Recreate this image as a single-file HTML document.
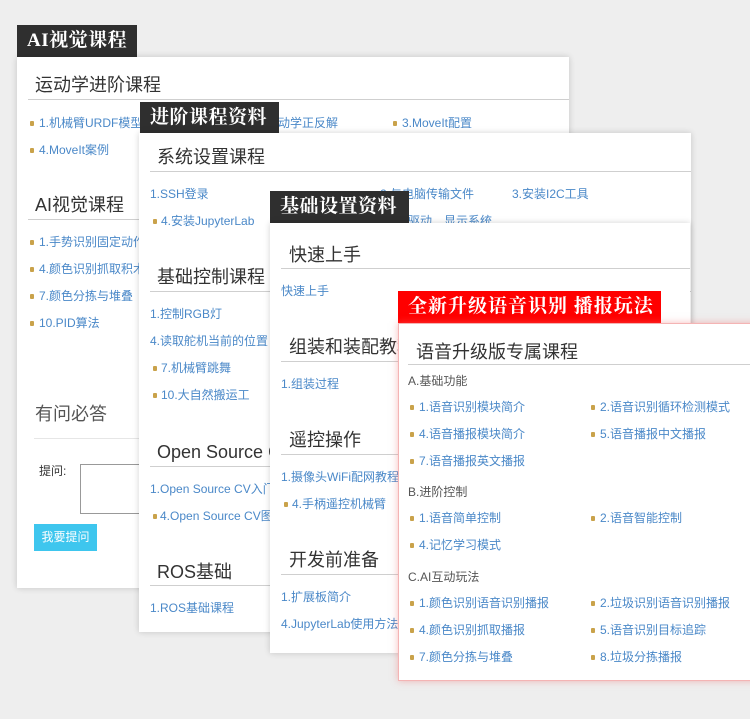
<!DOCTYPE html>
<html><head><meta charset="utf-8"><style>
*{margin:0;padding:0;box-sizing:border-box}
body{width:750px;height:719px;background:#eeeeee;position:relative;overflow:hidden;font-family:"Liberation Sans","Noto Sans CJK SC",sans-serif}
div,span{position:absolute;white-space:nowrap}
.p{background:#fff;box-shadow:0 0 6px rgba(0,0,0,.18)}
.lb{background:#2f2f2f;color:#fff;font-family:"Liberation Serif","Noto Serif CJK SC",serif;font-weight:bold;font-size:19px;line-height:31px;padding-left:10px;letter-spacing:0.5px}
.h{font-size:18px;line-height:22px;color:#333}
.ln{height:1px;background:#cfcfcf}
.a{font-size:12px;line-height:16px;color:#4a88c8}
.b{width:4px;height:5px;background:#c9a24a;border-radius:1px}
.s{font-size:12px;line-height:16px;color:#555}
</style></head><body>

<!-- Panel 1 -->
<div class="lb" style="left:17px;top:25px;width:120px;height:32px">AI视觉课程</div>
<div class="p" style="left:17px;top:57px;width:552px;height:531px"></div>
<div class="h" style="left:35px;top:74px">运动学进阶课程</div>
<div class="ln" style="left:28px;top:99px;width:541px"></div>
<div class="b" style="left:30px;top:121px"></div><div class="a" style="left:39px;top:115px">1.机械臂URDF模型</div>
<div class="a" style="left:256px;top:115px">2.运动学正反解</div>
<div class="b" style="left:393px;top:121px"></div><div class="a" style="left:402px;top:115px">3.MoveIt配置</div>
<div class="b" style="left:30px;top:148px"></div><div class="a" style="left:39px;top:142px">4.MoveIt案例</div>
<div class="h" style="left:35px;top:194px">AI视觉课程</div>
<div class="ln" style="left:28px;top:219px;width:541px"></div>
<div class="b" style="left:30px;top:240px"></div><div class="a" style="left:39px;top:234px">1.手势识别固定动作</div>
<div class="b" style="left:30px;top:267px"></div><div class="a" style="left:39px;top:261px">4.颜色识别抓取积木</div>
<div class="b" style="left:30px;top:294px"></div><div class="a" style="left:39px;top:288px">7.颜色分拣与堆叠</div>
<div class="b" style="left:30px;top:321px"></div><div class="a" style="left:39px;top:315px">10.PID算法</div>
<div class="h" style="left:35px;top:403px;color:#555">有问必答</div>
<div class="ln" style="left:34px;top:438px;width:535px;background:#e6e6e6"></div>
<div class="s" style="left:39px;top:463px;color:#333">提问:</div>
<div style="left:80px;top:464px;width:100px;height:50px;border:1px solid #999"></div>
<div style="left:34px;top:524px;width:63px;height:27px;background:#3ec6ee;color:#fff;font-size:12px;line-height:27px;text-align:center">我要提问</div>

<!-- Panel 2 -->
<div class="lb" style="left:140px;top:102px;width:139px;height:31px">进阶课程资料</div>
<div class="p" style="left:139px;top:133px;width:552px;height:499px"></div>
<div class="h" style="left:157px;top:146px">系统设置课程</div>
<div class="ln" style="left:150px;top:171px;width:541px"></div>
<div class="a" style="left:150px;top:186px">1.SSH登录</div>
<div class="a" style="left:380px;top:186px">2.与电脑传输文件</div>
<div class="a" style="left:512px;top:186px">3.安装I2C工具</div>
<div class="b" style="left:153px;top:219px"></div><div class="a" style="left:161px;top:213px">4.安装JupyterLab</div>
<div class="a" style="left:350px;top:213px">5.安装屏幕驱动　显示系统</div>
<div class="h" style="left:157px;top:266px">基础控制课程</div>
<div class="ln" style="left:150px;top:291px;width:541px"></div>
<div class="a" style="left:150px;top:306px">1.控制RGB灯</div>
<div class="a" style="left:150px;top:333px">4.读取舵机当前的位置</div>
<div class="b" style="left:153px;top:366px"></div><div class="a" style="left:161px;top:360px">7.机械臂跳舞</div>
<div class="b" style="left:153px;top:393px"></div><div class="a" style="left:161px;top:387px">10.大自然搬运工</div>
<div class="h" style="left:157px;top:441px">Open Source CV</div>
<div class="ln" style="left:150px;top:466px;width:541px"></div>
<div class="a" style="left:150px;top:481px">1.Open Source CV入门</div>
<div class="b" style="left:153px;top:514px"></div><div class="a" style="left:160px;top:508px">4.Open Source CV图像处理</div>
<div class="h" style="left:157px;top:561px">ROS基础</div>
<div class="ln" style="left:150px;top:585px;width:541px"></div>
<div class="a" style="left:150px;top:600px">1.ROS基础课程</div>

<!-- Panel 3 -->
<div class="lb" style="left:270px;top:191px;width:139px;height:32px">基础设置资料</div>
<div class="p" style="left:270px;top:223px;width:420px;height:430px"></div>
<div class="h" style="left:289px;top:244px">快速上手</div>
<div class="ln" style="left:281px;top:268px;width:409px"></div>
<div class="a" style="left:281px;top:283px">快速上手</div>
<div class="h" style="left:289px;top:336px">组装和装配教程</div>
<div class="ln" style="left:281px;top:361px;width:409px"></div>
<div class="a" style="left:281px;top:376px">1.组装过程</div>
<div class="h" style="left:289px;top:429px">遥控操作</div>
<div class="ln" style="left:281px;top:454px;width:409px"></div>
<div class="a" style="left:281px;top:469px">1.摄像头WiFi配网教程</div>
<div class="b" style="left:284px;top:502px"></div><div class="a" style="left:292px;top:496px">4.手柄遥控机械臂</div>
<div class="h" style="left:289px;top:549px">开发前准备</div>
<div class="ln" style="left:281px;top:574px;width:409px"></div>
<div class="a" style="left:281px;top:589px">1.扩展板简介</div>
<div class="a" style="left:281px;top:616px">4.JupyterLab使用方法</div>

<!-- Panel 4 -->
<div class="lb" style="left:398px;top:291px;width:263px;height:32px;background:#ff0000;font-size:19px;letter-spacing:1px">全新升级语音识别 播报玩法</div>
<div style="left:398px;top:323px;width:360px;height:358px;background:#fff;border:1px solid #f4b4b4;box-shadow:0 0 7px rgba(240,120,120,.5)"></div>
<div class="h" style="left:416px;top:341px">语音升级版专属课程</div>
<div class="ln" style="left:408px;top:364px;width:342px"></div>
<div class="s" style="left:408px;top:373px">A.基础功能</div>
<div class="b" style="left:410px;top:405px"></div><div class="a" style="left:419px;top:399px">1.语音识别模块简介</div>
<div class="b" style="left:591px;top:405px"></div><div class="a" style="left:600px;top:399px">2.语音识别循环检测模式</div>
<div class="b" style="left:410px;top:432px"></div><div class="a" style="left:419px;top:426px">4.语音播报模块简介</div>
<div class="b" style="left:591px;top:432px"></div><div class="a" style="left:600px;top:426px">5.语音播报中文播报</div>
<div class="b" style="left:410px;top:459px"></div><div class="a" style="left:419px;top:453px">7.语音播报英文播报</div>
<div class="s" style="left:408px;top:484px">B.进阶控制</div>
<div class="b" style="left:410px;top:516px"></div><div class="a" style="left:419px;top:510px">1.语音简单控制</div>
<div class="b" style="left:591px;top:516px"></div><div class="a" style="left:600px;top:510px">2.语音智能控制</div>
<div class="b" style="left:410px;top:543px"></div><div class="a" style="left:419px;top:537px">4.记忆学习模式</div>
<div class="s" style="left:408px;top:569px">C.AI互动玩法</div>
<div class="b" style="left:410px;top:601px"></div><div class="a" style="left:419px;top:595px">1.颜色识别语音识别播报</div>
<div class="b" style="left:591px;top:601px"></div><div class="a" style="left:600px;top:595px">2.垃圾识别语音识别播报</div>
<div class="b" style="left:410px;top:628px"></div><div class="a" style="left:419px;top:622px">4.颜色识别抓取播报</div>
<div class="b" style="left:591px;top:628px"></div><div class="a" style="left:600px;top:622px">5.语音识别目标追踪</div>
<div class="b" style="left:410px;top:655px"></div><div class="a" style="left:419px;top:649px">7.颜色分拣与堆叠</div>
<div class="b" style="left:591px;top:655px"></div><div class="a" style="left:600px;top:649px">8.垃圾分拣播报</div>
</body></html>
